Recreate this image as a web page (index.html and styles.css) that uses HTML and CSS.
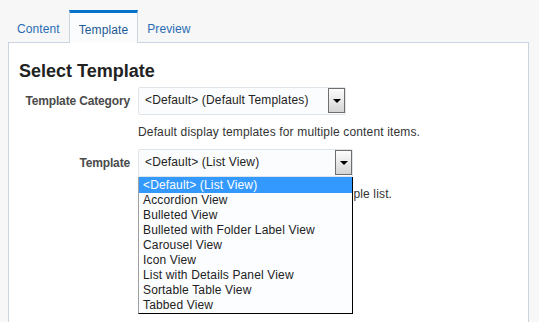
FILE: index.html
```html
<!DOCTYPE html>
<html lang="en">
<head>
  <meta charset="UTF-8">
  <title>Select Template</title>
  <link rel="stylesheet" href="styles.css">
</head>
<body>
  <div class="tabs">
    <div class="tab">Content</div>
    <div class="tab active">Template</div>
    <div class="tab">Preview</div>
  </div>

  <div class="panel">
    <h2>Select Template</h2>

    <div class="form-grid">
      <label class="field-label">Template Category</label>
      <div class="select cat">
        <span class="select-text">&lt;Default&gt; (Default Templates)</span>
        <span class="select-btn"><span class="arrow"></span></span>
      </div>
      <span></span>
      <p class="hint">Default display templates for multiple content items.</p>

      <label class="field-label">Template</label>
      <div class="select-wrap">
        <div class="select tpl">
          <span class="select-text">&lt;Default&gt; (List View)</span>
          <span class="select-btn"><span class="arrow"></span></span>
        </div>
        <!-- open dropdown list -->
        <ul class="dropdown">
          <li class="selected">&lt;Default&gt; (List View)</li>
          <li>Accordion View</li>
          <li>Bulleted View</li>
          <li>Bulleted with Folder Label View</li>
          <li>Carousel View</li>
          <li>Icon View</li>
          <li>List with Details Panel View</li>
          <li>Sortable Table View</li>
          <li>Tabbed View</li>
        </ul>
      </div>
      <span></span>
      <p class="hint">Displays multiple content items in a simple list.</p>
    </div>
  </div>
</body>
</html>
```

FILE: styles.css
```css
body {
  margin: 0;
  background-color: #f7f7f7;
  font-family: "Liberation Sans", Arial, sans-serif;
  font-size: 12px;
  color: #333;
}

/* Tabs */
.tabs {
  display: flex;
  padding-left: 8px;
  margin-top: 10px;
}
.tab {
  padding: 0 9px;
  height: 32px;
  line-height: 38px;
  color: #2a6cb4;
  letter-spacing: 0.1px;
  box-sizing: border-box;
}
.tab.active {
  background-color: #fbfcfd;
  border-top: 3px solid #0572ce;
  border-left: 1px solid #c9d6e2;
  border-right: 1px solid #c9d6e2;
  color: #1d5a95;
  line-height: 34px;
  height: 33px;
  margin-bottom: -1px;
  position: relative;
  z-index: 1;
}

/* Panel */
.panel {
  background-color: #fff;
  border: 1px solid #c9d6e2;
  border-bottom: none;
  margin: 0 10px 0 8px;
  padding: 18px 10px 60px 10px;
  min-height: 240px;
}
h2 {
  margin: 0 0 6px 0;
  font-size: 18px;
  line-height: 20px;
  color: #222;
}

/* Form */
.form-grid {
  display: grid;
  grid-template-columns: 111px auto;
  column-gap: 8px;
  align-items: center;
}
.field-label {
  text-align: right;
  font-weight: bold;
  letter-spacing: -0.15px;
  color: #4a4a4a;
}
.hint {
  margin: 0;
  padding: 10px 0 10px 0;
  line-height: 14px;
  letter-spacing: 0.15px;
  color: #333;
}

.select {
  display: flex;
  align-items: stretch;
  height: 28px;
  box-sizing: border-box;
  border: 1px solid #dfe4e8;
  background-color: #fbfcfd;
  border-radius: 2px;
}
.select.cat { width: 208px; }
.select.tpl { width: 215px; }
.select-text {
  flex: 1;
  padding-left: 6px;
  line-height: 25px;
  color: #222;
  letter-spacing: 0.15px;
  white-space: nowrap;
}
.select-btn {
  width: 17px;
  margin: 0 0 1px 0;
  box-sizing: border-box;
  border: 1px solid #6e6e6e;
  background: linear-gradient(#fdfdfd, #d4d4d4);
  display: flex;
  align-items: center;
  justify-content: center;
}
.arrow {
  width: 0;
  height: 0;
  border-left: 4px solid transparent;
  border-right: 4px solid transparent;
  border-top: 4px solid #000;
}

/* Dropdown list */
.select-wrap {
  position: relative;
}
.dropdown {
  position: absolute;
  left: 0;
  top: 28px;
  width: 215px;
  box-sizing: border-box;
  margin: 0;
  padding: 0;
  list-style: none;
  background-color: #fcfdff;
  border-left: 1px solid #a0a0a0;
  border-right: 1px solid #000;
  border-bottom: 1px solid #000;
  z-index: 2;
}
.dropdown li {
  height: 15px;
  line-height: 15px;
  padding-left: 4px;
  color: #222;
  letter-spacing: 0.15px;
  white-space: nowrap;
}
.dropdown li.selected {
  height: 16px;
  line-height: 16px;
  background-color: #3399ff;
  color: #fff;
}
```
